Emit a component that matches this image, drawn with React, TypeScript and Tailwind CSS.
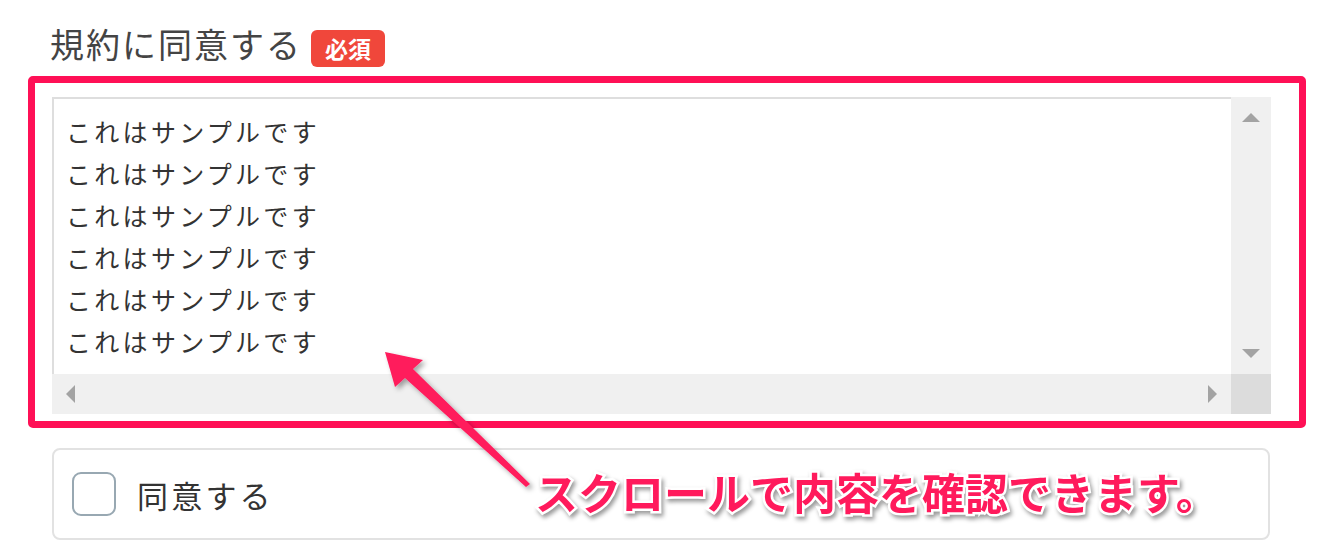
import React from "react";

const lines = Array.from({ length: 6 }, () => "これはサンプルです");

export default function App() {
  return (
    <div className="relative w-[1317px] h-[552px] overflow-hidden bg-white font-['Noto_Sans_CJK_JP',sans-serif]">
      <div className="pt-[24px]">
        <div className="ml-[50px] flex h-[52px] items-start">
          <span className="text-[34px] leading-[40px] tracking-[2px] text-[#444]">規約に同意する</span>
          <span className="ml-[9px] mt-[6px] flex h-[37px] w-[74px] items-center justify-center rounded-[6px] bg-[#f0473b] text-[23px] font-bold leading-none text-white">
            必須
          </span>
        </div>
        <div className="ml-[28px] h-[352px] w-[1278px] rounded-[5px] border-[7px] border-[#ff1056] pl-[17px] pt-[14px]">
          <div className="grid h-[317px] w-[1219px] grid-cols-[1fr_40px] grid-rows-[1fr_40px]">
            <div className="border-l-2 border-t-2 border-[#dedede] bg-white pl-[12px] pt-[11px]">
              {lines.map((l, i) => (
                <div key={i} className="text-[25px] leading-[42px] tracking-[3.3px] text-[#333]">
                  {l}
                </div>
              ))}
            </div>
            <div className="flex flex-col items-center justify-between bg-[#f0f0f0] pb-[16px] pt-[16px]">
              <div className="h-0 w-0 border-x-[9px] border-b-[9px] border-x-transparent border-b-[#a3a3a3]" />
              <div className="h-0 w-0 border-x-[9px] border-t-[9px] border-x-transparent border-t-[#a3a3a3]" />
            </div>
            <div className="flex items-center justify-between bg-[#f0f0f0] pl-[14px] pr-[14px]">
              <div className="h-0 w-0 border-y-[9px] border-r-[9px] border-y-transparent border-r-[#a3a3a3]" />
              <div className="h-0 w-0 border-y-[9px] border-l-[9px] border-y-transparent border-l-[#a3a3a3]" />
            </div>
            <div className="bg-[#dcdcdc]" />
          </div>
        </div>
        <div className="ml-[52px] mt-[20px] flex h-[92px] w-[1218px] items-center rounded-[8px] border-2 border-[#e2e2e2] pl-[18px]">
          <div className="h-[44px] w-[44px] rounded-[9px] border-2 border-[#98a8b2] bg-white" />
          <span className="ml-[21px] text-[31px] leading-none tracking-[3.2px] text-[#333]">同意する</span>
        </div>
      </div>

      <svg className="absolute left-0 top-0" width="1317" height="552" viewBox="0 0 1317 552">
        <defs>
          <filter id="sh" x="-20%" y="-20%" width="140%" height="140%">
            <feDropShadow dx="3" dy="3" stdDeviation="2.5" floodColor="#000" floodOpacity="0.35" />
          </filter>
        </defs>
        <polygon
          points="385,352 423,360 413,369 530,484 526,487 405,378 395,387"
          fill="#ff1a5c"
          filter="url(#sh)"
        />
      </svg>

      <div className="absolute left-[535px] top-[461px] text-[43px] font-bold leading-[60px] text-[#ff1a5c] [paint-order:stroke_fill] [-webkit-text-stroke:5px_white] [filter:drop-shadow(2px_3px_2px_rgba(0,0,0,0.4))]">
        スクロールで内容を確認できます。
      </div>
    </div>
  );
}
